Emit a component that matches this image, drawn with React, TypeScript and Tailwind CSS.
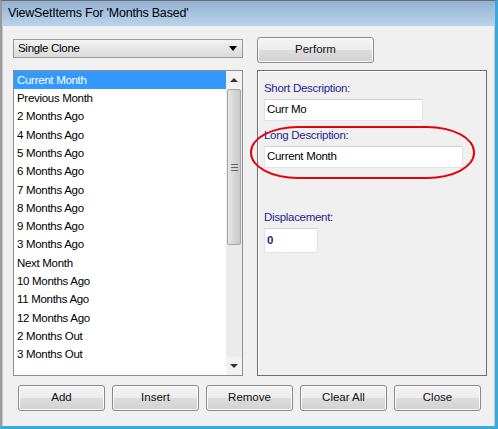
import React from "react";

const MONTHS = [
  "Current Month",
  "Previous Month",
  "2 Months Ago",
  "4 Months Ago",
  "5 Months Ago",
  "6 Months Ago",
  "7 Months Ago",
  "8 Months Ago",
  "9 Months Ago",
  "3 Months Ago",
  "Next Month",
  "10 Months Ago",
  "11 Months Ago",
  "12 Months Ago",
  "2 Months Out",
  "3 Months Out",
];

const BUTTONS = ["Add", "Insert", "Remove", "Clear All", "Close"];

function WinButton({ label, className = "" }: { label: string; className?: string }) {
  return (
    <button
      className={`flex items-center justify-center rounded-[3px] border border-[#8a8a8a] bg-[linear-gradient(#f4f4f4_0%,#ececec_48%,#dcdcdc_52%,#d2d2d2_100%)] text-[11.5px] text-[#111] shadow-[inset_0_0_0_1px_#fbfbfb] ${className}`}
    >
      {label}
    </button>
  );
}

function ListBox() {
  return (
    <div className="flex h-[306px] border border-[#8e8f8f] bg-white">
      <ul className="flex-1">
        {MONTHS.map((m, i) => (
          <li
            key={m}
            className={`flex h-[18.33px] items-center pl-[3px] tracking-[-0.3px] ${
              i === 0 ? "bg-[#3399ff] text-white" : "text-black"
            }`}
          >
            {m}
          </li>
        ))}
      </ul>
      <div className="flex w-[16px] flex-col bg-[#ebebeb]">
        <div className="flex h-[18px] items-center justify-center bg-[#f2f2f2]">
          <span className="h-0 w-0 border-x-[4px] border-b-[4px] border-x-transparent border-b-[#333]" />
        </div>
        <div className="flex flex-1 flex-col">
          <div className="mx-px flex h-[156px] items-center justify-center rounded-[2px] border border-[#a8a8a8] bg-[linear-gradient(90deg,#e6e6e6,#d6d6d6_50%,#c9c9c9)]">
            <div className="flex flex-col gap-[2px]">
              <span className="block h-px w-[7px] bg-[#666]" />
              <span className="block h-px w-[7px] bg-[#666]" />
              <span className="block h-px w-[7px] bg-[#666]" />
            </div>
          </div>
        </div>
        <div className="flex h-[18px] items-center justify-center bg-[#f2f2f2]">
          <span className="h-0 w-0 border-x-[4px] border-t-[4px] border-x-transparent border-t-[#333]" />
        </div>
      </div>
    </div>
  );
}

function Field({ label, value, width, bold = false }: { label: string; value: string; width: string; bold?: boolean }) {
  return (
    <div className="flex flex-col gap-[4px]">
      <span className="h-[14px] text-[11.5px] leading-[14px] tracking-[-0.3px] text-[#1f1f8f]">{label}</span>
      <div
        className={`flex items-center border border-[#e2e3ea] border-t-[#d0d0d0] bg-white pl-[2px] tracking-[-0.3px] ${width} ${
          bold ? "font-bold text-[#1f1f8f]" : "text-black"
        }`}
      >
        {value}
      </div>
    </div>
  );
}

export default function App() {
  return (
    <div className="flex h-[429px] w-[498px] flex-col border-t border-l-[2px] border-r-[3px] border-b-[3px] border-t-[#6a6a6a] border-l-[#9a9a9a] border-r-[#3aa9dc] border-b-[#3aa9dc] bg-[#f0f0f0] font-['Liberation_Sans',Arial,sans-serif] text-[11.5px]">
      <div className="flex h-[25px] items-center bg-[linear-gradient(#94b2d3,#b9d3ec)] pl-[6px] text-[12.5px] tracking-[-0.2px] text-black">
        ViewSetItems For 'Months Based'
      </div>
      <div className="flex flex-1 flex-col border-l border-r border-[#c8c8c8] pl-[10px] pr-[5px] pt-[11px]">
        <div className="grid grid-cols-[230px_230px] gap-x-[14px] gap-y-[7px]">
          <div className="pt-[2px]">
            <div className="flex h-[19px] items-center justify-between border border-[#9a9a9a] bg-[linear-gradient(#f3f3f3,#e6e6e6_50%,#dadada)] pl-[4px] pr-[5px] tracking-[-0.3px]">
              <span>Single Clone</span>
              <span className="h-0 w-0 border-x-[4.5px] border-t-[5px] border-x-transparent border-t-black" />
            </div>
          </div>
          <div>
            <WinButton label="Perform" className="h-[26px] w-[117px]" />
          </div>
          <ListBox />
          <div className="relative flex h-[306px] flex-col border border-[#6e6e6e] px-[6px] pt-[10px] shadow-[inset_1px_1px_0_#fff]">
            <div className="flex flex-col gap-[7px]">
              <Field label="Short Description:" value="Curr Mo" width="w-[159px] h-[22px]" />
              <Field label="Long Description:" value="Current Month" width="w-[199px] h-[22px]" />
            </div>
            <div className="mt-[42px]">
              <Field label="Displacement:" value="0" width="w-[54px] h-[25px]" bold />
            </div>
            <div className="pointer-events-none absolute left-[-8px] top-[55px] h-[53px] w-[225px] rounded-[48px/26px] border-2 border-[#e3000f]" />
          </div>
        </div>
        <div className="mt-[9px] flex gap-[7px] pl-[5px]">
          {BUTTONS.map((b) => (
            <WinButton key={b} label={b} className="h-[26px] w-[87px]" />
          ))}
        </div>
      </div>
    </div>
  );
}
